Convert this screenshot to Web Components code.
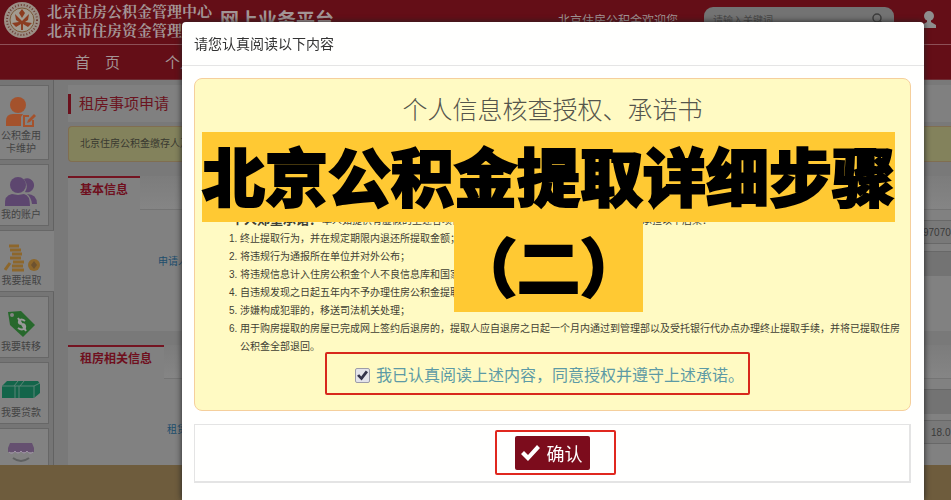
<!DOCTYPE html>
<html lang="zh-CN">
<head>
<meta charset="utf-8">
<meta name="viewport" content="width=device-width, initial-scale=1">
<title>北京住房公积金网上业务平台</title>
<style>
  body {
    margin: 0;
    height: 100vh;
    overflow: hidden;
    background: #777777;
    font-family: "Liberation Sans", "Noto Sans CJK SC", sans-serif;
    font-size: 10px;
    color: #3a3a3a;
  }
</style>
</head>
<body>
<fund-page>
  <fund-header slot="header"></fund-header>
  <side-menu slot="menu">
    <menu-card>
      <svg slot="icon" width="32" height="32" viewBox="0 0 32 32">
        <circle cx="13" cy="8" r="8" fill="#a4522c"/>
        <path d="M1 29V24Q1 17 8 17H18L16 20V29Z" fill="#a4522c"/>
        <path d="M28 23V29H19V19H24" fill="none" stroke="#a4522c" stroke-width="2"/>
        <path d="M22 26L23 23L29 17L31 19L25 25Z" fill="#a4522c"/>
      </svg>
      公积金用<br>卡维护
    </menu-card>
    <menu-card>
      <svg slot="icon" width="36" height="30" viewBox="0 0 36 30">
        <path d="M21 2A7 7 0 1 1 22 15Q26 9 21 2Z" fill="#5d466f"/>
        <path d="M24 17Q34 17 34 27H29Q28 20 24 17Z" fill="#5d466f"/>
        <circle cx="15" cy="8" r="8" fill="#5d466f"/>
        <path d="M2 29Q1 18 9 17L15 18L21 17Q27 18 27 29Z" fill="#5d466f"/>
      </svg>
      我的账户
    </menu-card>
    <menu-card active>
      <svg slot="icon" width="36" height="28" viewBox="0 0 36 28">
        <g stroke="#8d672c" stroke-width="3">
          <path d="M5 2H15M6 6H17M8 10H18M6 14H17M9 18H20M8 22H19M8 26H20"/>
          <path d="M1 26L6 19"/>
        </g>
        <circle cx="30" cy="21" r="6" fill="#8d672c"/>
        <path d="M30 17L33 21L30 25L27 21Z" fill="#6d5230"/>
      </svg>
      我要提取
    </menu-card>
    <menu-card>
      <svg slot="icon" width="30" height="28" viewBox="0 0 30 28">
        <path d="M2 2L15 1L29 15L17 27L4 15Z" fill="#27682c"/>
        <circle cx="6" cy="5" r="2" fill="#848484"/>
        <path d="M19 11Q15 8 13 11Q12 14 16 14Q20 14 19 18Q16 21 12 18M12 8L20 21" fill="none" stroke="#9a9a9a" stroke-width="2"/>
      </svg>
      我要转移
    </menu-card>
    <menu-card>
      <svg slot="icon" width="38" height="20" viewBox="0 0 38 20">
        <path d="M0 6L5 1H36L38 4V13L32 18H0Z" fill="#13654a"/>
        <path d="M0 6H32L38 3M13 6V18M17 6V18M12 6L16 1M18 6L22 1M32 6V18" fill="none" stroke="#5b8476" stroke-width="1"/>
      </svg>
      我要贷款
    </menu-card>
    <menu-card>
      <svg slot="icon" width="26" height="28" viewBox="0 0 26 28">
        <path d="M2 1H24L26 6V10H0V6Z" fill="#655070"/>
        <path d="M1 10Q4 13 7 9Q10 13 13 9Q16 13 19 9Q22 13 25 10" fill="none" stroke="#a08fa8" stroke-width="1"/>
        <path d="M5 16Q13 22 21 16" fill="none" stroke="#5f6060" stroke-width="2"/>
      </svg>
      我要查询
    </menu-card>
  </side-menu>
  <page-title>租房事项申请</page-title>
  <notice-bar>北京住房公积金缴存人及配偶</notice-bar>
  <info-panel heading="基本信息">
    <info-field label="申请人" value="970704" offset="first"></info-field>
  </info-panel>
  <info-panel heading="租房相关信息">
    <info-field label="租赁" value="18.0" offset="second"></info-field>
  </info-panel>
</fund-page>

<modal-dialog heading="请您认真阅读以下内容">
  <commitment-letter></commitment-letter>
  <confirm-bar slot="footer">确认</confirm-bar>
</modal-dialog>

<script>
function attach(el, html) {
  const template = document.createElement("template");
  template.innerHTML = html;
  const shadowRoot = el.attachShadow({mode: "open"});
  shadowRoot.append(template.content.cloneNode(true));
  return shadowRoot;
}

// page frame: header, side menu, content column, footer band
class FundPage extends HTMLElement {
  constructor() {
    super();
    attach(this, `
      <style>
        :host { display: flex; flex-direction: column; height: 100vh; }
        .body { display: flex; flex: 1; min-height: 0; overflow: hidden; }
        main { flex: 1; min-width: 0; padding: 5px 0 0 14px; background: #797979; }
        footer { flex: none; height: 35px; background: #6e5c3d; }
      </style>
      <slot name="header"></slot>
      <div class="body">
        <slot name="menu"></slot>
        <main><slot></slot></main>
      </div>
      <footer></footer>`);
  }
}

class FundHeader extends HTMLElement {
  constructor() {
    super();
    attach(this, `
      <style>
        :host { display: block; flex: none; background: #640e17; color: #a39596; }
        .top { display: flex; align-items: flex-start; height: 45px; border-bottom: 1px solid #8d5057; box-sizing: border-box; overflow: hidden; }
        .logo { flex: none; margin: 1px 6px 0 3px; }
        .org { margin-top: 1px; font: bold 15px/19px "Noto Serif CJK SC", "Liberation Serif", "Noto Sans CJK SC", serif; white-space: nowrap; }
        .platform { margin: 8px 0 0 8px; font-size: 19px; line-height: 26px; font-weight: bold; white-space: nowrap; }
        .welcome { margin: 13px 26px 0 auto; font-size: 12px; line-height: 16px; white-space: nowrap; }
        .search { display: flex; align-items: center; box-sizing: border-box; width: 190px; height: 24px; margin: 7px 28px 0 0; padding: 0 10px 0 9px; border-radius: 9px; background: #737373; }
        input { flex: 1; min-width: 0; padding: 0; border: 0; background: none; outline: 0; font: 10px "Noto Sans CJK SC", sans-serif; color: #333; }
        input::placeholder { color: #474747; }
        .user { flex: none; margin: 11px 15px 0 0; }
        nav { display: flex; gap: 45px; height: 35px; padding-left: 75px; border-bottom: 1px solid #6d2c33; box-sizing: border-box; }
        a { color: inherit; text-decoration: none; font-size: 15px; line-height: 36px; }
      </style>
      <div class="top">
        <svg class="logo" width="38" height="38" viewBox="0 0 38 38">
          <circle cx="19" cy="19" r="18" fill="#9b8f85"/>
          <circle cx="19" cy="19" r="15" fill="none" stroke="#6b3b32" stroke-width="2" stroke-dasharray="1 2"/>
          <circle cx="19" cy="19" r="12" fill="#a29b90" stroke="#7b5a3a"/>
          <path d="M19 8L22 12L19 17L16 12ZM12 13L17 18L19 20L21 18L26 13L25 19L22 21L29 22L25 26L20 23V29H18V23L13 26L9 22L16 21L13 19Z" fill="#8b3c20"/>
        </svg>
        <div class="org">北京住房公积金管理中心<br>北京市住房资金管理中心</div>
        <div class="platform">网上业务平台</div>
        <div class="welcome">北京住房公积金欢迎您</div>
        <div class="search">
          <input type="search" placeholder="请输入关键词" aria-label="请输入关键词">
          <svg width="12" height="12" viewBox="0 0 12 12" fill="none" stroke="#3d3d3d" stroke-width="1.5">
            <circle cx="5" cy="5" r="4"/><path d="M8 8L11 11"/>
          </svg>
        </div>
        <svg class="user" width="14" height="17" viewBox="0 0 14 17" fill="#8e8e8e">
          <circle cx="7" cy="5" r="5"/><path d="M5 8H9V11L14 14V17H0V14L5 11Z"/>
        </svg>
      </div>
      <nav><a href="#">首　页</a><a href="#">个人</a></nav>`);
  }
}

class SideMenu extends HTMLElement {
  constructor() {
    super();
    attach(this, `
      <style>
        :host { display: block; flex: none; width: 54px; padding-top: 5px; box-sizing: border-box; border-right: 1px solid #626262; background: #757575; }
        nav { display: flex; flex-direction: column; gap: 4px; }
      </style>
      <nav><slot></slot></nav>`);
  }
}

class MenuCard extends HTMLElement {
  constructor() {
    super();
    attach(this, `
      <style>
        :host { display: block; width: 49px; }
        :host([active]) { width: 54px; }
        a { display: flex; flex-direction: column; align-items: center; box-sizing: border-box; min-height: 62px; padding: 11px 6px 4px 0; border: 1px solid #676767; border-left: 0; background: #828282; color: #424242; text-decoration: none; text-align: center; line-height: 13px; white-space: nowrap; }
        :host([active]) a { padding-right: 11px; border-right: 0; }
        .icon { display: flex; align-items: center; height: 32px; }
      </style>
      <a href="#"><span class="icon"><slot name="icon"></slot></span><span><slot></slot></span></a>`);
  }
}

class PageTitle extends HTMLElement {
  constructor() {
    super();
    attach(this, `
      <style>
        :host { display: block; padding: 9px 0 8px; background: #808080; }
        h1 { margin: 0; padding-left: 8px; border-left: 3px solid #6b101c; font-size: 15px; line-height: 20px; font-weight: normal; color: #6b1420; }
      </style>
      <h1><slot></slot></h1>`);
  }
}

class NoticeBar extends HTMLElement {
  constructor() {
    super();
    attach(this, `
      <style>
        :host { display: block; margin: 4px 0 14px; padding: 9px 11px; border: 1px solid #806e50; border-right: 0; border-radius: 4px 0 0 4px; background: #83825c; line-height: 16px; color: #393930; }
      </style>
      <slot></slot>`);
  }
}

class InfoPanel extends HTMLElement {
  constructor() {
    super();
    const root = attach(this, `
      <style>
        :host { display: block; margin-bottom: 14px; background: #818181; }
        .bar { display: flex; height: 34px; background: linear-gradient(#7c7c7c, #858585); border-bottom: 1px solid #747474; box-sizing: border-box; }
        h2 { margin: 0 0 -1px; padding: 0 12px; border-top: 2px solid #741421; background: #818181; font-size: 12px; line-height: 24px; color: #6f0f1d; }
        .fields { min-height: 121px; }
      </style>
      <div class="bar"><h2></h2></div>
      <div class="fields"><slot></slot></div>`);
    root.querySelector("h2").textContent = this.getAttribute("heading");
  }
}

// one label on the left of the row, one value box at its right end
class InfoField extends HTMLElement {
  constructor() {
    super();
    const root = attach(this, `
      <style>
        :host { display: block; }
        .row { display: flex; flex-direction: column; }
        input { align-self: flex-end; box-sizing: border-box; width: 40px; height: 24px; margin-top: 10px; padding: 0 0 0 11px; border: 1px solid #686868; border-right: 0; background: #797979; font: 10px "Liberation Sans", sans-serif; color: #3a3a3a; }
        .strip { align-self: flex-end; width: 40px; height: 24px; margin-top: 7px; background: #737373; border-top: 1px solid #686868; }
        label { margin: -22px 0 0 90px; line-height: 16px; color: #1c4d6c; }
        :host([offset="second"]) .strip { margin-top: 10px; order: -1; }
        :host([offset="second"]) input { margin-top: 6px; padding-left: 19px; }
        :host([offset="second"]) label { padding-left: 9px; }
      </style>
      <div class="row">
        <input id="value" type="text">
        <div class="strip"></div>
        <label for="value"></label>
      </div>`);
    root.querySelector("input").value = this.getAttribute("value");
    root.querySelector("label").textContent = this.getAttribute("label");
  }
}

class ModalDialog extends HTMLElement {
  constructor() {
    super();
    const root = attach(this, `
      <style>
        :host { display: block; position: fixed; inset: 0; box-sizing: border-box; padding: 22px 27px 0 182px; overflow: hidden; }
        section { min-height: 100%; border-radius: 4px 4px 0 0; background: #fffffe; box-shadow: 0 0 6px #222222; }
        h2 { margin: 0; padding: 11px 12px 10px; border-bottom: 1px solid #e5e5e5; font-size: 14px; line-height: 22px; font-weight: normal; color: #333333; }
        .content { display: flex; flex-direction: column; gap: 13px; padding: 12px 13px 17px 12px; }
      </style>
      <section role="dialog" aria-labelledby="heading">
        <h2 id="heading"></h2>
        <div class="content">
          <slot></slot>
          <slot name="footer"></slot>
        </div>
      </section>`);
    root.querySelector("h2").textContent = this.getAttribute("heading");
  }
}

class CommitmentLetter extends HTMLElement {
  constructor() {
    super();
    attach(this, `
      <style>
        :host { display: block; position: relative; padding: 15px 10px; border: 1px solid #f5cf9c; border-radius: 8px; background: #fffac3; color: #3f3f33; }
        h3 { margin: 0 0 103px; font-size: 25px; line-height: 32px; font-weight: 300; text-align: center; color: #55554c; }
        p { margin: -18px 0 0 26px; line-height: 18px; white-space: nowrap; }
        p b { font-size: 13px; line-height: 18px; }
        ol { margin: 0; padding-left: 35px; line-height: 18px; }
        .agree { display: flex; align-items: center; gap: 6px; box-sizing: border-box; width: 425px; height: 43px; margin: -4px auto 0 120px; padding: 4px 0 0 28px; border: 2px solid #d8281c; border-radius: 2px; }
        label { font-size: 16px; line-height: 24px; white-space: nowrap; color: #5d9aa5; }
        input { appearance: none; flex: none; display: grid; place-items: center; width: 15px; height: 15px; margin: 0; border: 1px solid #9c9ca8; border-radius: 2px; background: #e4e4ea; }
        input:checked::before { content: ""; width: 11px; height: 11px; background: #34344a; clip-path: polygon(0 52%, 20% 38%, 38% 58%, 80% 4%, 100% 20%, 42% 96%); }
        /* caption laid across the letter */
        .banner { position: absolute; top: 53px; left: 7px; display: flex; flex-direction: column; align-items: center; font-family: "Noto Sans CJK SC", sans-serif; font-size: 63px; line-height: 83px; font-weight: 900; color: #000; -webkit-text-stroke: 2px #000; white-space: nowrap; }
        .banner span { padding-bottom: 7px; background: #ffc933; }
      </style>
      <h3>个人信息核查授权、承诺书</h3>
      <p><b>个人郑重承诺：</b>本人如提供有虚假的上述各项信息资料，或骗提住房公积金的，本人自愿承担以下后果：</p>
      <ol>
        <li>终止提取行为，并在规定期限内退还所提取金额；</li>
        <li>将违规行为通报所在单位并对外公布；</li>
        <li>将违规信息计入住房公积金个人不良信息库和国家</li>
        <li>自违规发现之日起五年内不予办理住房公积金提取</li>
        <li>涉嫌构成犯罪的，移送司法机关处理；</li>
        <li>用于购房提取的房屋已完成网上签约后退房的，提取人应自退房之日起一个月内通过到管理部以及受托银行代办点办理终止提取手续，并将已提取住房公积金全部退回。</li>
      </ol>
      <div class="agree">
        <input id="agree" type="checkbox" checked>
        <label for="agree">我已认真阅读上述内容，同意授权并遵守上述承诺。</label>
      </div>
      <div class="banner"><span>北京公积金提取详细步骤</span><span>（二）</span></div>`);
  }
}

class ConfirmBar extends HTMLElement {
  constructor() {
    super();
    attach(this, `
      <style>
        :host { display: flex; justify-content: center; padding: 5px 0 6px 6px; border: 1px solid #e4e4e4; border-right-width: 2px; border-bottom-width: 2px; }
        .mark { padding: 4px 24px 3px 18px; border: 2px solid #e0281f; border-radius: 2px; }
        button { display: flex; align-items: center; gap: 7px; height: 34px; padding: 0 7px 0 6px; border: 0; border-radius: 2px; background: #7c0c1c; color: #fff; font: 18px/24px "Noto Sans CJK SC", sans-serif; }
      </style>
      <div class="mark">
        <button type="button">
          <svg width="19" height="16" viewBox="0 0 19 16"><path d="M0 9L3 6L7 10L16 0L19 3L7 16Z" fill="#fff"/></svg>
          <slot></slot>
        </button>
      </div>`);
  }
}

customElements.define("fund-page", FundPage);
customElements.define("fund-header", FundHeader);
customElements.define("side-menu", SideMenu);
customElements.define("menu-card", MenuCard);
customElements.define("page-title", PageTitle);
customElements.define("notice-bar", NoticeBar);
customElements.define("info-panel", InfoPanel);
customElements.define("info-field", InfoField);
customElements.define("modal-dialog", ModalDialog);
customElements.define("commitment-letter", CommitmentLetter);
customElements.define("confirm-bar", ConfirmBar);
</script>
</body>
</html>
